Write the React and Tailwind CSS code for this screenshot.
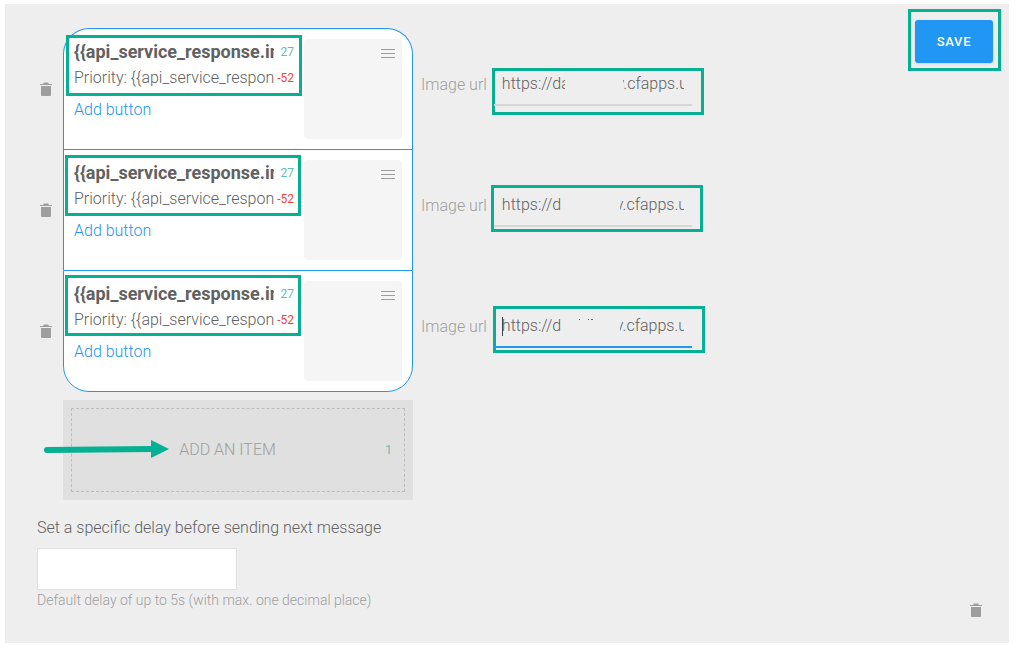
import React from 'react';

const rows = [
  {
    id: 1,
    url: 'https://da            v.cfapps.us',
    textMark: 'left-[2px] top-[6px]',
    urlMark: 'left-[428px] top-[39px]',
    mask: 'left-[71px] w-[58px]',
  },
  {
    id: 2,
    url: 'https://d              v.cfapps.us',
    textMark: 'left-[1px] top-[5px]',
    urlMark: 'left-[427px] top-[35px]',
    mask: 'left-[68px] w-[58px]',
  },
  {
    id: 3,
    url: 'https://d              v.cfapps.us',
    textMark: 'left-[1px] top-[4px]',
    urlMark: 'left-[429px] top-[35px]',
    mask: 'left-[68px] w-[58px]',
    focused: true,
  },
];

function Trash() {
  return (
    <svg width="12" height="14" viewBox="0 0 12 14" fill="#9e9e9e" aria-hidden="true">
      <path d="M0 3V2h3l1-1.5h4L9 2h3v1z" />
      <path d="M1 4h10v9q0 1-1 1H2q-1 0-1-1z" />
    </svg>
  );
}

function Mark({ className }) {
  return <div className={`pointer-events-none absolute border-[3px] border-[#07b092] ${className}`} />;
}

function Item({ row, first, last }) {
  return (
    <div className="flex">
      <div className="flex w-[23px] shrink-0 items-center">
        <button type="button" aria-label="Delete item">
          <Trash />
        </button>
      </div>
      <div
        className={`relative flex w-[350px] shrink-0 border-x border-t border-[#2196f3] bg-white p-[10px] ${
          first ? 'rounded-t-[26px]' : ''
        } ${last ? 'rounded-b-[26px] border-b' : ''}`}
      >
        <div className="flex w-[220px] flex-col items-start">
          <div className="flex w-full items-center justify-between">
            <input
              aria-label="Title"
              defaultValue="{{api_service_response.intents"
              className="h-[26px] w-[200px] bg-transparent pb-0.5 text-[18px] font-bold text-[#616161] outline-none"
            />
            <span className="text-[12px] font-normal text-[#62bfad]">27</span>
          </div>
          <div className="flex w-full items-center justify-between">
            <input
              aria-label="Subtitle"
              defaultValue="Priority: {{api_service_respon"
              className="h-[26px] w-[200px] bg-transparent pb-0.5 text-[16px] text-[#616161] outline-none"
            />
            <span className="text-[12px] font-normal text-[#f44336]">-52</span>
          </div>
          <button type="button" className="mt-[7px] text-[16px] leading-6 text-[#2196f3]">
            Add button
          </button>
        </div>
        <div className="ml-auto flex h-[100px] w-[98px] items-start justify-end rounded bg-[#f5f5f5] px-[7px] py-[10px]">
          <svg width="14" height="9" viewBox="0 0 14 9" stroke="#9e9e9e" aria-hidden="true">
            <path d="M0 .5h14M0 4.5h14M0 8.5h14" />
          </svg>
        </div>
        <Mark className={`h-[61px] w-[236px] ${row.textMark}`} />
        <Mark className={`h-[47px] w-[212px] ${row.urlMark}`} />
      </div>
      <div className="ml-2 mt-[36px] flex h-[42px] gap-[7px]">
        <label htmlFor={`url-${row.id}`} className="text-[16px] leading-[42px] text-[#9e9e9e]">
          Image url
        </label>
        <div className="relative">
          <input
            id={`url-${row.id}`}
            defaultValue={row.url}
            className={`h-[42px] w-[198px] border-b-2 bg-transparent px-2 pb-0.5 text-[16px] text-[#616161] outline-none ${
              row.focused ? 'border-[#2196f3]' : 'border-[#d6d6d6]'
            }`}
          />
          <div className={`absolute top-[9px] h-[24px] bg-[#eeeeee] ${row.mask}`} />
          {row.focused && (
            <>
              <div className="absolute left-2 top-[11px] h-[19px] w-px bg-[#424242]" />
              <svg className="absolute left-[84px] top-[13px]" width="18" height="1" fill="#616161" aria-hidden="true">
                <path d="M1 0h1v1H1zM10 0h1v1h-1zM13 0h2v1h-2z" />
              </svg>
            </>
          )}
        </div>
      </div>
    </div>
  );
}

export default function App() {
  return (
    <div className="flex min-h-screen flex-col bg-white pb-3 pl-[5px] pr-[7px] pt-1 font-['Roboto',sans-serif] font-light">
      <main className="flex grow flex-col bg-[#eeeeee] pl-8">
        <div className="flex items-start justify-between pr-2">
          <div className="pl-[3px] pt-6">
            {rows.map((row, i) => (
              <Item key={row.id} row={row} first={i === 0} last={i === rows.length - 1} />
            ))}
            <div className="relative ml-[23px] mt-2 w-[350px] bg-[#e0e0e0] p-2">
              <button
                type="button"
                className="flex h-[84px] w-full items-center border border-dashed border-[#bdbdbd] pr-3 text-[16px] text-[#9e9e9e]"
              >
                <span className="grow text-center">ADD AN ITEM</span>
                <span className="w-[9px] text-right text-[12px] font-normal text-[#62bfad]">1</span>
              </button>
              <svg
                className="pointer-events-none absolute left-[-20px] top-[40px]"
                width="126"
                height="20"
                viewBox="0 0 126 20"
                aria-hidden="true"
              >
                <path d="M4 10 109 9" stroke="#07b092" strokeWidth="6" strokeLinecap="round" />
                <path d="M108 0v18l18-9z" fill="#07b092" />
              </svg>
            </div>
          </div>
          <div className="mt-[5px] border-[3px] border-[#07b092] pb-[5px] pl-1 pr-[5px] pt-2">
            <button
              type="button"
              className="block h-[43px] w-[78px] rounded-[3px] bg-[#2196f3] text-[13px] font-medium tracking-wider text-white shadow"
            >
              SAVE
            </button>
          </div>
        </div>
        <div className="flex items-end justify-between pr-[27px]">
          <div className="mt-4 flex flex-col items-start">
            <label htmlFor="delay" className="text-[16px] leading-6 text-[#616161]">
              Set a specific delay before sending next message
            </label>
            <input
              id="delay"
              aria-describedby="delay-help"
              className="mt-2 h-[42px] w-[200px] border border-[#e0e0e0] bg-white px-2 outline-none"
            />
            <p id="delay-help" className="text-[14px] leading-5 text-[#9e9e9e]">
              Default delay of up to 5s (with max. one decimal place)
            </p>
          </div>
          <button type="button" aria-label="Delete message" className="-mb-[7px]">
            <Trash />
          </button>
        </div>
      </main>
    </div>
  );
}
